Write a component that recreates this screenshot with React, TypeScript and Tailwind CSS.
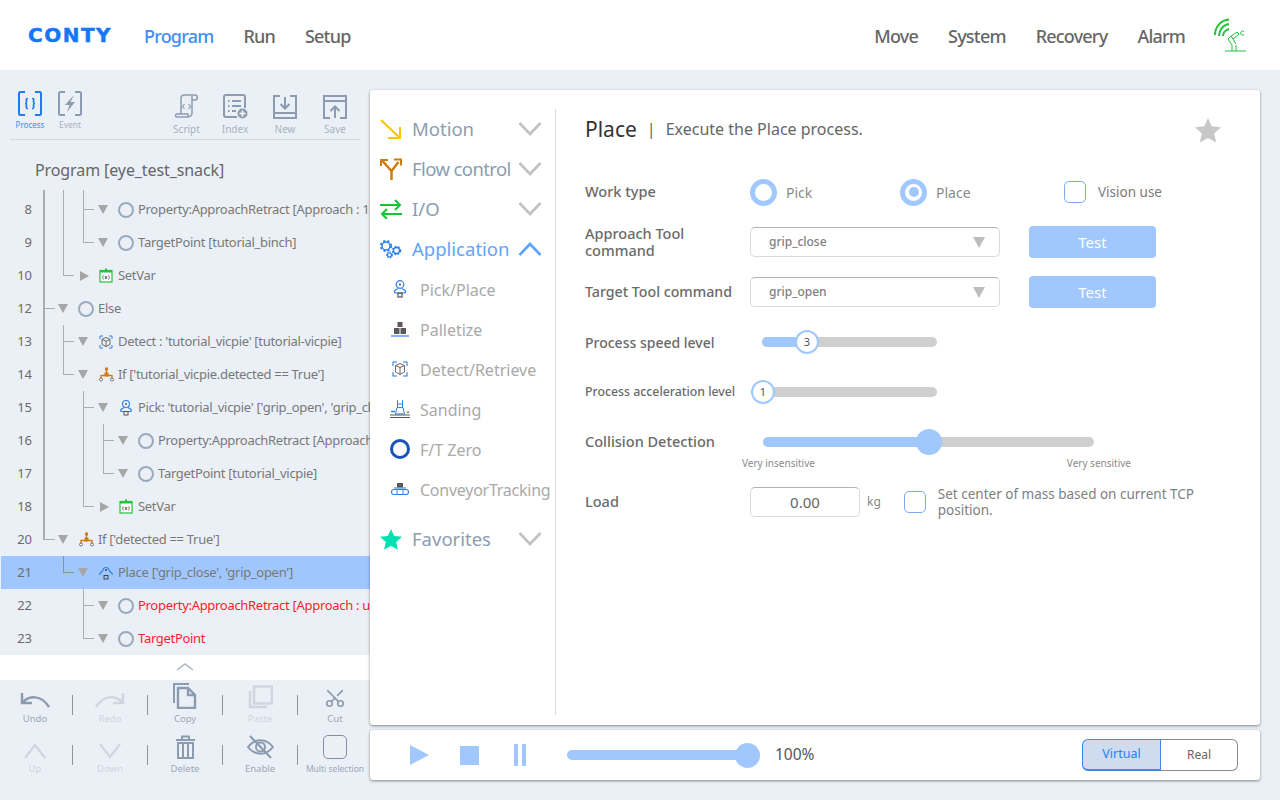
import React from "react";
import { Scissors } from "lucide-react";

const slate = "#8c9cb0";
const faint = "#d0d6de";

type IconName = "circle" | "setvar" | "setvar2" | "detect" | "if" | "pick" | "place";

type TreeRow = {
    n: number;
    guides: string;
    arrow?: "down" | "right";
    icon: IconName;
    text: string;
    red?: boolean;
    selected?: boolean;
};

const rows: TreeRow[] = [
    { n: 8, guides: "IIT", icon: "circle", text: "Property:ApproachRetract [Approach : 100.0 mm]" },
    { n: 9, guides: "IIL", icon: "circle", text: "TargetPoint [tutorial_binch]" },
    { n: 10, guides: "IL", arrow: "right", icon: "setvar", text: "SetVar" },
    { n: 12, guides: "T", icon: "circle", text: "Else" },
    { n: 13, guides: "IT", icon: "detect", text: "Detect : 'tutorial_vicpie' [tutorial-vicpie]" },
    { n: 14, guides: "IL", icon: "if", text: "If ['tutorial_vicpie.detected == True']" },
    { n: 15, guides: "I_T", icon: "pick", text: "Pick: 'tutorial_vicpie' ['grip_open', 'grip_close']" },
    { n: 16, guides: "I_IT", icon: "circle", text: "Property:ApproachRetract [Approach : 100.0 mm]" },
    { n: 17, guides: "I_IL", icon: "circle", text: "TargetPoint [tutorial_vicpie]" },
    { n: 18, guides: "I_L", arrow: "right", icon: "setvar2", text: "SetVar" },
    { n: 20, guides: "L", icon: "if", text: "If ['detected == True']" },
    { n: 21, guides: "_L", icon: "place", text: "Place ['grip_close', 'grip_open']", selected: true },
    { n: 22, guides: "__T", icon: "circle", text: "Property:ApproachRetract [Approach : unknown]", red: true },
    { n: 23, guides: "__L", icon: "circle", text: "TargetPoint", red: true },
];

const Guide = ({ kind, first, dark }: { kind: string; first: boolean; dark?: boolean }) => {
    const color = dark ? "border-[#8a929b]" : "border-[#a9aeb3]";
    const line = `${first ? "border-l-2" : "border-l"} ${color}`;
    const stub = `w-2.5 border-b ${color}`;
    if (kind === "I") return <div className={`w-5 h-full shrink-0 ${line}`} />;
    if (kind === "T")
        return (
            <div className={`w-5 h-full shrink-0 ${line}`}>
                <div className={`h-1/2 ${stub}`} />
            </div>
        );
    if (kind === "L") return <div className={`w-5 h-1/2 shrink-0 self-start ${line}`}><div className={`h-full ${stub}`} /></div>;
    return <div className="w-5 shrink-0" />;
};

const TreeIcon = ({ name }: { name: IconName }) => {
    if (name === "circle") return <div className="w-4 h-4 rounded-full border-[2.5px] border-[#9aaabd]" />;
    if (name === "setvar" || name === "setvar2")
        return (
            <svg width="14" height="15" viewBox="0 0 14 15" fill="none">
                <rect x="1" y="2.5" width="12" height="11.5" fill="#fff" stroke="#22c33c" strokeWidth="1.2" />
                <path d="M1 2h12v2.5H1zM6 .5h2v2H6z" fill="#22c33c" />
                <path d="M4.5 7.5c-1 1-1 3 0 4M9.5 7.5c1 1 1 3 0 4M6 8l2 3M8 8l-2 3" stroke="#555" strokeWidth=".9" />
            </svg>
        );
    if (name === "detect")
        return (
            <svg width="14" height="14" viewBox="0 0 14 14" fill="none">
                <path d="M1 4V1h3M10 1h3v3M13 10v3h-3M4 13H1v-3" stroke="#2f7fe8" strokeWidth="1" />
                <path d="M7 2.5l4 1.8v5.2l-4 2-4-2V4.300zM3 4.300l4 2 4-2M7 6.300v5.700" stroke="#666" strokeWidth="1" />
            </svg>
        );
    if (name === "if")
        return (
            <svg width="15" height="15" viewBox="0 0 15 15" fill="none">
                <path d="M7.500 1v6M2 12V8.500h11V12" stroke="#d17b0f" strokeWidth="1.300" />
                <rect x="5.500" y="5.500" width="4" height="4" fill="#d17b0f" />
                <rect x="6" y="0.500" width="3" height="3" fill="#d17b0f" />
                <circle cx="2" cy="12.500" r="1.500" fill="#fff" stroke="#555" strokeWidth=".8" />
                <circle cx="13" cy="12.500" r="1.500" fill="#fff" stroke="#555" strokeWidth=".8" />
            </svg>
        );
    if (name === "pick")
        return (
            <svg width="14" height="16" viewBox="0 0 14 16" fill="none">
                <circle cx="7" cy="4" r="3.500" stroke="#2f7fe8" strokeWidth="1.100" />
                <circle cx="7" cy="4" r="1" fill="#555" />
                <path d="M5 7.500L2 9.500c-1 .9 0 2 1 2h8c1 0 2-1.100 1-2L9 7.500" stroke="#2f7fe8" strokeWidth="1.100" />
                <rect x="5" y="11.500" width="4" height="3.500" stroke="#555" strokeWidth="1" />
            </svg>
        );
    return (
        <svg width="14" height="14" viewBox="0 0 14 14" fill="none">
            <path d="M4 4.500a3 3 0 0 1 6 0" stroke="#2f7fe8" strokeWidth="1.100" />
            <circle cx="7" cy="4" r="1" fill="#444" />
            <path d="M4 4.500L.8 7.500v1.500M10 4.500l3.200 3v1.500" stroke="#2f7fe8" strokeWidth="1.100" />
            <rect x="5" y="9.500" width="4" height="3.500" stroke="#444" strokeWidth="1" />
        </svg>
    );
};

const Tree = () => (
    <div className="h-[465px] overflow-hidden">
        <div className="flex h-[3px] pl-[43px]">
            <Guide kind="I" first />
            <Guide kind="I" first={false} />
            <Guide kind="I" first={false} />
        </div>
        {rows.map((r) => (
            <div key={r.n} className={`flex items-center h-[33px] whitespace-nowrap ${r.selected ? "bg-[#9fc7fd] ml-px" : ""}`}>
                <div className={`text-right text-[13px] text-[#6b6b6b] shrink-0 pr-px ${r.selected ? "w-8" : "w-[33px]"}`}>{r.n}</div>
                <div className="flex h-full pl-2.5 shrink-0">
                    {r.guides.split("").map((g, i) => (
                        <Guide key={i} kind={g} first={i === 0} dark={r.selected} />
                    ))}
                </div>
                <div className="w-[11px] -ml-[5px] shrink-0">
                    {r.arrow === "right" ? (
                        <div className="w-0 h-0 border-y-[5.5px] border-y-transparent border-l-[9px] border-l-[#a6a6a6] ml-0.5" />
                    ) : (
                        <div className="w-0 h-0 border-x-[5.5px] border-x-transparent border-t-[9px] border-t-[#a6a6a6]" />
                    )}
                </div>
                <div className="w-[18px] ml-2 mr-[3px] flex justify-center shrink-0">
                    <TreeIcon name={r.icon} />
                </div>
                <span className={`text-[13px] pt-px tracking-[-0.3px] ${r.red ? "text-[#fb1c2c]" : "text-[#787878]"}`}>{r.text}</span>
            </div>
        ))}
    </div>
);

const TopTool = ({ label, className, children }: { label: string; className?: string; children: React.ReactNode }) => (
    <div className={`w-[50px] flex flex-col items-center ${className ?? ""}`}>
        <div className="h-7 flex items-end">{children}</div>
        <span className="text-[10px] leading-[14px] mt-[3px] text-[#a7b2bf]">{label}</span>
    </div>
);

const ProgramToolbar = () => (
    <div className="h-[70px] flex mx-2.5 border-b border-[#d5d9dd]">
        <div className="flex pt-[21px] pl-0.5 gap-1">
            <div className="w-9 flex flex-col items-center">
                <svg width="24" height="25" viewBox="0 0 24 25" fill="none" stroke="#1f7bf0" strokeWidth="2">
                    <path d="M7 1H2.500C1.500 1 1 1.500 1 2.500v20c0 1 .5 1.500 1.500 1.500H7M17 1h4.500c1 0 1.500.5 1.500 1.500v20c0 1-.5 1.500-1.500 1.500H17" />
                    <path d="M10 7.500c-2.500 0-1.500 2-1.500 3.500 0 1-.5 1.500-1.500 1.500 1 0 1.500.5 1.500 1.500 0 1.500-1 3.500 1.500 3.500M14 7.500c2.500 0 1.500 2 1.500 3.500 0 1 .5 1.500 1.500 1.500-1 0-1.500.5-1.500 1.500 0 1.500 1 3.500-1.500 3.500" strokeWidth="1.700" />
                </svg>
                <span className="text-[8px] leading-3 mt-[3px] text-[#3f8cf3]">Process</span>
            </div>
            <div className="w-9 flex flex-col items-center">
                <svg width="24" height="25" viewBox="0 0 24 25" fill="none" stroke={slate} strokeWidth="2">
                    <path d="M7 1H2.500C1.500 1 1 1.500 1 2.500v20c0 1 .5 1.500 1.500 1.500H7M17 1h4.500c1 0 1.500.5 1.500 1.500v20c0 1-.5 1.500-1.500 1.500H17" />
                    <path d="M16 4L7 14h4.500L9 21l8-10h-4.500z" fill={slate} stroke="none" />
                </svg>
                <span className="text-[8.5px] leading-3 mt-[3px] text-[#a7b2bf]">Event</span>
            </div>
        </div>
        <div className="flex ml-auto pt-[21px]">
            <TopTool label="Script" className="pl-[3px]">
                <svg width="25" height="25" viewBox="0 0 25 25" fill="none" stroke={slate} strokeWidth="1.500">
                    <path d="M7 20V4c0-3 2-3 4-3h10c3 0 3 5 0 5h-3M18 6V2M18 6v13c0 2-2 4-4 4H3c-2 0-2-3 0-3h11c0 1 0 3 0 3" />
                    <path d="M10.500 10l-2 2.500 2 2.500M14.500 10l2 2.500-2 2.500" strokeWidth="1.200" />
                </svg>
            </TopTool>
            <TopTool label="Index">
                <svg width="25" height="25" viewBox="0 0 25 25" fill="none" stroke={slate} strokeWidth="2">
                    <path d="M14 23H3c-1 0-2-1-2-2V3c0-1 1-2 2-2h17c1 0 2 1 2 2v11" />
                    <path d="M5 7h1.500M9 7h9M5 12h1.500M9 12h9M5 17h1.500M9 17h4" />
                    <circle cx="19.500" cy="19.500" r="5" fill={slate} stroke="none" />
                    <path d="M19.500 16.500v6M16.500 19.500h6" stroke="#fff" strokeWidth="1.600" />
                </svg>
            </TopTool>
            <TopTool label="New">
                <svg width="24" height="24" viewBox="0 0 24 24" fill="none" stroke={slate} strokeWidth="2">
                    <path d="M7 1H1v22h22V1h-6M1 18h22" />
                    <path d="M12 2v11M7.500 9l4.500 4.500L16.500 9" />
                </svg>
            </TopTool>
            <TopTool label="Save">
                <svg width="24" height="24" viewBox="0 0 24 24" fill="none" stroke={slate} strokeWidth="2">
                    <path d="M7 23H1V1h22v22h-6M1 6h22" />
                    <path d="M12 23V12M7.500 16l4.500-4.500 4.500 4.500" />
                </svg>
            </TopTool>
        </div>
    </div>
);

const EditTool = ({ label, dim, small, icon }: { label: string; dim?: boolean; small?: boolean; icon: React.ReactNode }) => (
    <div className="w-[70px] shrink-0 flex flex-col items-center">
        <div className="h-6 flex items-end justify-center">{icon}</div>
        <span className={`leading-[14px] mt-[3px] whitespace-nowrap ${small ? "text-[8.5px]" : "text-[9.5px]"} ${dim ? "text-[#d0d6de]" : "text-[#9aa7b6]"}`}>{label}</span>
    </div>
);

const Sep = () => <div className="w-px h-5 mx-0.5 bg-[#8f959b] shrink-0" />;

const EditToolbar = () => (
    <div className="h-[120px] flex flex-col">
        <div className="h-[50px] flex items-center">
            <EditTool
                label="Undo"
                icon={
                    <svg width="30" height="18" viewBox="0 0 30 18" fill="none" stroke={slate} strokeWidth="2.500">
                        <path d="M2 2v10h10M3 11c6-6 18-8 26 5" />
                    </svg>
                }
            />
            <Sep />
            <EditTool
                label="Redo"
                dim
                icon={
                    <svg width="30" height="18" viewBox="0 0 30 18" fill="none" stroke={faint} strokeWidth="2.500">
                        <path d="M28 2v10H18M27 11C21 5 9 3 1 16" />
                    </svg>
                }
            />
            <Sep />
            <EditTool
                label="Copy"
                icon={
                    <svg width="24" height="26" viewBox="0 0 24 26" fill="none" stroke={slate} strokeWidth="2">
                        <path d="M1 20V1h15" />
                        <path d="M5 5h10l7 7v13H5zM15 5v7h7" strokeWidth="2.400" />
                    </svg>
                }
            />
            <Sep />
            <EditTool
                label="Paste"
                dim
                icon={
                    <svg width="25" height="24" viewBox="0 0 25 24" fill="none" stroke={faint} strokeWidth="2.500">
                        <rect x="6" y="1.500" width="18" height="17" />
                        <path d="M2 6v16h17" />
                    </svg>
                }
            />
            <Sep />
            <EditTool label="Cut" icon={<Scissors size={22} color={slate} strokeWidth={1.800} className="-rotate-90" />} />
        </div>
        <div className="h-[50px] flex items-center">
            <EditTool
                label="Up"
                dim
                icon={
                    <svg width="22" height="16" viewBox="0 0 22 16" fill="none" stroke={faint} strokeWidth="2.200">
                        <path d="M1 15L11 2l10 13" />
                    </svg>
                }
            />
            <Sep />
            <EditTool
                label="Down"
                dim
                icon={
                    <svg width="22" height="16" viewBox="0 0 22 16" fill="none" stroke={faint} strokeWidth="2.200">
                        <path d="M1 1l10 13L21 1" />
                    </svg>
                }
            />
            <Sep />
            <EditTool
                label="Delete"
                icon={
                    <svg width="19" height="24" viewBox="0 0 19 24" fill="none" stroke={slate} strokeWidth="2">
                        <path d="M0 5h19M6 5V1.500h7V5" />
                        <path d="M2 8h15v15H2zM7 8v15M12 8v15" />
                    </svg>
                }
            />
            <Sep />
            <EditTool
                label="Enable"
                icon={
                    <svg width="27" height="24" viewBox="0 0 27 24" fill="none" stroke={slate} strokeWidth="2">
                        <path d="M1 12c7-9 18-9 25 0-7 9-18 9-25 0z" />
                        <circle cx="13.500" cy="12" r="4.500" />
                        <path d="M3 1l21 22" strokeWidth="2.200" />
                    </svg>
                }
            />
            <Sep />
            <EditTool
                label="Multi selection"
                small
                icon={<div className="w-6 h-6 rounded-[5px] border border-[#7f8fa3]" />}
            />
        </div>
    </div>
);

const LeftPanel = () => (
    <div className="w-[370px] shrink-0 overflow-hidden">
        <ProgramToolbar />
        <div className="h-[50px] pl-[35px] pt-5 text-[16px] leading-[21px] tracking-[-0.1px] text-[#666]">Program [eye_test_snack]</div>
        <Tree />
        <div className="h-[25px] bg-white flex justify-center items-center pb-0.5">
            <svg width="18" height="9" viewBox="0 0 18 9" fill="none" stroke="#a8b4c2" strokeWidth="1.500">
                <path d="M1 8l8-6 8 6" />
            </svg>
        </div>
        <EditToolbar />
    </div>
);

const Chevron = ({ up }: { up?: boolean }) => (
    <svg width="24" height="14" viewBox="0 0 24 14" fill="none" stroke={up ? "#5ea4fb" : "#c2c2c2"} strokeWidth="2.600" className="ml-auto mr-[13px] shrink-0">
        {up ? <path d="M1.500 13L12 2l10.500 11" /> : <path d="M1.500 1L12 12 22.500 1" />}
    </svg>
);

const MenuHead = ({ label, icon, up, tight, className }: { label: string; icon: React.ReactNode; up?: boolean; tight?: boolean; className?: string }) => (
    <div className={`h-10 flex items-center pl-2.5 ${className ?? ""}`}>
        <div className="w-[22px] flex justify-center shrink-0">{icon}</div>
        <span className={`ml-2.5 text-[18.5px] whitespace-nowrap ${tight ? "tracking-[-0.6px]" : ""} ${up ? "text-[#5ea4fb]" : "text-[#8b9db1]"}`}>{label}</span>
        <Chevron up={up} />
    </div>
);

const MenuItem = ({ label, icon, tight }: { label: string; icon: React.ReactNode; tight?: boolean }) => (
    <div className="h-10 flex items-center pl-5">
        <div className="w-5 flex justify-center shrink-0">{icon}</div>
        <span className={`ml-2.5 pt-px text-[16px] text-[#a9a9a9] whitespace-nowrap ${tight ? "tracking-[-0.25px]" : ""}`}>{label}</span>
    </div>
);

const Gears = () => (
    <svg width="22" height="20" viewBox="0 0 22 20" fill="none" stroke="#2a7ff0">
        <circle cx="6" cy="7" r="4" strokeWidth="1.500" />
        <circle cx="6" cy="7" r="5.200" strokeWidth="1.800" strokeDasharray="2.200 2" />
        <circle cx="16.500" cy="11.500" r="3" strokeWidth="1.300" />
        <circle cx="16.500" cy="11.500" r="4" strokeWidth="1.500" strokeDasharray="1.800 1.500" />
        <circle cx="9.500" cy="16" r="2" strokeWidth="1.200" />
        <circle cx="9.500" cy="16" r="2.800" strokeWidth="1.200" strokeDasharray="1.400 1.200" />
    </svg>
);

const CommandMenu = () => (
    <div className="w-[186px] shrink-0 h-[606px] border-r border-[#dcdcdc]">
        <MenuHead
            label="Motion"
            icon={
                <svg width="22" height="20" viewBox="0 0 22 20" fill="none" stroke="#fdc500" strokeWidth="2">
                    <path d="M1 1l19 18M20 8v11H8" />
                </svg>
            }
        />
        <MenuHead
            label="Flow control"
            tight
            icon={
                <svg width="22" height="22" viewBox="0 0 22 22" fill="none" stroke="#cf7c0c" strokeWidth="2.500">
                    <path d="M11.500 22v-9L2.500 3M11.500 13l7-9" />
                    <path d="M1 8V2h7M14 1.500h7v6" strokeWidth="2" />
                </svg>
            }
        />
        <MenuHead
            label="I/O"
            icon={
                <svg width="22" height="20" viewBox="0 0 22 20" fill="none" stroke="#16c530" strokeWidth="2">
                    <path d="M0 6h20M15 1l5 5-5 5M22 15H2M7 10l-5 5 5 5" />
                </svg>
            }
        />
        <MenuHead label="Application" up icon={<Gears />} />
        <MenuItem
            label="Pick/Place"
            icon={
                <svg width="14" height="18" viewBox="0 0 14 18" fill="none">
                    <circle cx="7" cy="4.500" r="3.800" stroke="#2a7ff0" strokeWidth="1.200" />
                    <circle cx="7" cy="4.500" r="1.100" fill="#555" />
                    <path d="M5 8.500L1.800 10.500c-1.100 1 0 2.500 1.200 2.500h8c1.200 0 2.300-1.500 1.200-2.500L9 8.500" stroke="#2a7ff0" strokeWidth="1.200" />
                    <rect x="5" y="13" width="4" height="4" stroke="#555" strokeWidth="1.200" />
                </svg>
            }
        />
        <MenuItem
            label="Palletize"
            icon={
                <svg width="18" height="16" viewBox="0 0 18 16" fill="none">
                    <path d="M6.500 1h5v5h-5zM3 7h5.500v6H3zM9.500 7H15v6H9.500z" fill="#5a5a5a" />
                    <path d="M0 15h18" stroke="#2a7ff0" strokeWidth="1.200" />
                </svg>
            }
        />
        <MenuItem
            label="Detect/Retrieve"
            icon={
                <svg width="16" height="16" viewBox="0 0 16 16" fill="none">
                    <path d="M1 5V1h4M11 1h4v4M15 11v4h-4M5 15H1v-4" stroke="#2a7ff0" strokeWidth="1.100" />
                    <path d="M8 2.500l4.500 2v6.500L8 13.500 3.500 11V4.500zM3.500 4.500L8 6.500l4.500-2M8 6.500v7" stroke="#666" strokeWidth="1" />
                </svg>
            }
        />
        <MenuItem
            label="Sanding"
            icon={
                <svg width="20" height="20" viewBox="0 0 20 20" fill="none" strokeWidth="1">
                    <path d="M7.500 1v7M12.500 1v7M7.500 5h5M5.500 15l1.500-6.500h6l1.500 6.500z" stroke="#2a7ff0" />
                    <path d="M1 12.500h4" stroke="#2a7ff0" strokeWidth="1.500" />
                    <path d="M0 16h20M0 18.500h20" stroke="#555" />
                    <path d="M17 12.500l1 1.500 1-1.500" stroke="#555" />
                </svg>
            }
        />
        <MenuItem label="F/T Zero" icon={<div className="w-5 h-5 rounded-full border-[3.5px] border-[#1a52b5]" />} />
        <MenuItem
            label="ConveyorTracking"
            tight
            icon={
                <svg width="18" height="12" viewBox="0 0 18 12" fill="none">
                    <rect x="6" y="0" width="6" height="4.500" fill="#5a5a5a" />
                    <rect x="0.500" y="6.500" width="17" height="5" rx="2.500" stroke="#2a7ff0" strokeWidth="1.100" />
                    <path d="M6 6.500v5M12 6.500v5" stroke="#2a7ff0" strokeWidth="1" />
                    <path d="M3 5h12" stroke="#2a7ff0" strokeWidth="1.100" />
                </svg>
            }
        />
        <MenuHead
            className="mt-2.5"
            label="Favorites"
            icon={
                <svg width="22" height="21" viewBox="0 0 22 21">
                    <path d="M11 0l3.200 7 7.800.8-5.800 5.200 1.700 7.700L11 16.800l-6.900 3.900 1.700-7.700L0 7.800 7.800 7z" fill="#00e0b0" />
                </svg>
            }
        />
    </div>
);

const Label = ({ children, className }: { children: React.ReactNode; className?: string }) => (
    <div className={`w-[165px] shrink-0 text-[#6a6a6a] font-medium ${className ?? "text-[14.5px]"}`}>{children}</div>
);

const Radio = ({ label, checked }: { label: string; checked?: boolean }) => (
    <div className="flex items-center w-[150px]">
        <div className="w-[27px] h-[27px] rounded-full border-[5px] border-[#a0c8fd] flex items-center justify-center">
            {checked && <div className="w-2.5 h-2.5 rounded-full bg-[#a0c8fd]" />}
        </div>
        <span className="ml-[9px] text-[14px] text-[#8a8a8a]">{label}</span>
    </div>
);

const Check = () => <div className="w-[22px] h-[22px] rounded-[5px] border border-[#7ea8e8] shrink-0" />;

const ToolCommand = ({ value }: { value: string }) => (
    <>
        <div className="w-[250px] h-[30px] rounded-[5px] border border-[#dadada] border-t-[#b4b4b4] flex items-center pl-[18px] pr-[14px]">
            <span className="text-[12px] font-medium text-[#808080]">{value}</span>
            <div className="ml-auto w-0 h-0 border-x-[6px] border-x-transparent border-t-[11px] border-t-[#bdbdbd]" />
        </div>
        <button className="ml-[29px] w-[127px] h-8 rounded-[4px] bg-[#a0c8fd] text-white text-[15px]">Test</button>
    </>
);

const LevelSlider = ({ value, fill }: { value: number; fill: number }) => (
    <div className="relative ml-3 w-[175px] h-2.5 rounded-full bg-[#cfcfcf]">
        <div className="h-full rounded-full bg-[#a0c8fd]" style={{ width: fill }} />
        <div
            className="absolute top-[-7px] w-6 h-6 rounded-full bg-white border-[2.5px] border-[#a0c8fd] flex items-center justify-center text-[11px] text-[#555]"
            style={{ left: fill - 12 }}
        >
            {value}
        </div>
    </div>
);

const PlaceForm = () => (
    <div className="flex-1 pl-[29px]">
        <div className="flex items-center h-10 pr-10">
            <span className="pt-0.5 text-[21px] text-[#333]">Place</span>
            <span className="ml-2.5 text-[16px] text-[#666]">|</span>
            <span className="ml-2.5 text-[16px] text-[#666]">Execute the Place process.</span>
            <svg width="26" height="25" viewBox="0 0 22 21" className="ml-auto -mr-[0.5px] mt-0.5">
                <path d="M11 0l3.200 7 7.800.8-5.800 5.200 1.700 7.700L11 16.800l-6.900 3.900 1.700-7.700L0 7.800 7.800 7z" fill="#c8c8c8" />
            </svg>
        </div>
        <div className="mt-[18px]">
            <div className="flex items-center h-[50px]">
                <Label>Work type</Label>
                <Radio label="Pick" />
                <Radio label="Place" checked />
                <div className="flex items-center ml-3.5">
                    <Check />
                    <span className="ml-3 text-[13.5px] text-[#7a7a7a]">Vision use</span>
                </div>
            </div>
            <div className="flex items-center h-[50px]">
                <Label className="text-[14.5px] leading-[17px]">
                    Approach Tool
                    <br />
                    command
                </Label>
                <ToolCommand value="grip_close" />
            </div>
            <div className="flex items-center h-[50px]">
                <Label className="text-[14.2px]">Target Tool command</Label>
                <ToolCommand value="grip_open" />
            </div>
            <div className="flex items-center h-[50px]">
                <Label className="text-[14px]">Process speed level</Label>
                <LevelSlider value={3} fill={45} />
            </div>
            <div className="flex items-center h-[50px]">
                <Label className="text-[12.3px]">Process acceleration level</Label>
                <LevelSlider value={1} fill={1} />
            </div>
            <div className="flex items-center h-7 mt-[11px]">
                <Label>Collision Detection</Label>
                <div className="relative ml-[13px] w-[331px] h-2.5 rounded-full bg-[#cfcfcf]">
                    <div className="h-full w-[166px] rounded-full bg-[#a0c8fd]" />
                    <div className="absolute top-[-8px] left-[153px] w-[26px] h-[26px] rounded-full bg-[#a0c8fd]" />
                </div>
            </div>
            <div className="flex h-3.5 ml-[157px] w-[389px] justify-between text-[10px] leading-[14px] text-[#8a8a8a]">
                <span>Very insensitive</span>
                <span>Very sensitive</span>
            </div>
            <div className="flex items-center h-[30px] mt-[17px]">
                <Label>Load</Label>
                <div className="w-[110px] h-[30px] rounded-[5px] border border-[#dadada] border-t-[#b4b4b4] flex items-center justify-center text-[15px] text-[#666]">
                    0.00
                </div>
                <span className="ml-[7px] text-[12px] text-[#888]">kg</span>
                <div className="ml-[23px]">
                    <Check />
                </div>
                <p className="ml-3 w-[262px] text-[13.5px] leading-4 text-[#808080]">Set center of mass based on current TCP position.</p>
            </div>
        </div>
    </div>
);

const PlayBar = () => (
    <div className="h-[50px] rounded-[3px] bg-white shadow-[0_1px_3px_rgba(0,0,0,0.45)] flex items-center pl-10 pr-[22px]">
        <div className="w-0 h-0 border-y-[10.5px] border-y-transparent border-l-[19px] border-l-[#a0c8fd]" />
        <div className="ml-[31px] w-[19px] h-[19px] bg-[#a0c8fd]" />
        <div className="ml-[35px] flex gap-1">
            <div className="w-1 h-[22px] bg-[#a0c8fd]" />
            <div className="w-1 h-[22px] bg-[#a0c8fd]" />
        </div>
        <div className="relative ml-[41px] w-[193px] h-2.5 rounded-full bg-[#a0c8fd]">
            <div className="absolute right-0 top-[-7.500px] w-[25px] h-[25px] rounded-full bg-[#a0c8fd]" />
        </div>
        <span className="ml-[15px] text-[15.5px] text-[#555]">100%</span>
        <div className="ml-auto flex h-8">
            <div className="w-[79px] rounded-l-[6px] border border-b-2 border-[#3f88ea] bg-[#cfdcf0] text-[12.5px] text-[#2a7ff0] flex items-center justify-center">Virtual</div>
            <div className="w-[77px] rounded-r-[6px] border border-l-0 border-[#8a8a8a] text-[12px] text-[#666] flex items-center justify-center">Real</div>
        </div>
    </div>
);

const NavLink = ({ children, active }: { children: React.ReactNode; active?: boolean }) => (
    <span className={`pt-[3px] text-[18px] tracking-[-0.8px] font-medium ${active ? "text-[#3f8ef6]" : "text-[#666]"}`}>{children}</span>
);

const Header = () => (
    <header className="h-[70px] bg-white flex items-center pl-7 pr-[33px]">
        <span className="w-[116px] font-['DejaVu_Sans',sans-serif] font-bold text-[20px] tracking-[1.5px] text-[#1578f2] [-webkit-text-stroke:0.5px_#1578f2]">CONTY</span>
        <div className="flex gap-[30px]">
            <NavLink active>Program</NavLink>
            <NavLink>Run</NavLink>
            <NavLink>Setup</NavLink>
        </div>
        <div className="ml-auto flex items-center gap-[30px]">
            <NavLink>Move</NavLink>
            <NavLink>System</NavLink>
            <NavLink>Recovery</NavLink>
            <NavLink>Alarm</NavLink>
        </div>
        <svg width="34" height="34" viewBox="0 0 34 34" fill="none" stroke="#22c33c" className="ml-[28px]">
            <path d="M2 17C2 9 8 2 16 1.500" strokeWidth="2" />
            <path d="M6 18C6 12 10 7 16 6" strokeWidth="2" />
            <path d="M10 18c0-3 2.500-6 6-7" strokeWidth="2" />
            <path d="M12 33h21M19 33v-6M23 33v-6M19 27l-4-6 3-3 5 8M17 19l7-5 2 2-6 5" strokeWidth="1" />
            <path d="M31 13.500a2 2 0 1 0 0 3" strokeWidth="1" />
        </svg>
    </header>
);

export default function App() {
    return (
        <div className="w-[1280px] h-[800px] overflow-hidden bg-[#ebf0f6] font-['Noto_Sans','Noto_Sans_CJK_KR',sans-serif]">
            <Header />
            <div className="flex">
                <LeftPanel />
                <div className="w-[890px] pt-5 flex flex-col gap-[5px]">
                    <div className="h-[635px] rounded-[3px] bg-white shadow-[0_1px_3px_rgba(0,0,0,0.45)] flex pt-[19px]">
                        <CommandMenu />
                        <PlaceForm />
                    </div>
                    <PlayBar />
                </div>
            </div>
        </div>
    );
}
